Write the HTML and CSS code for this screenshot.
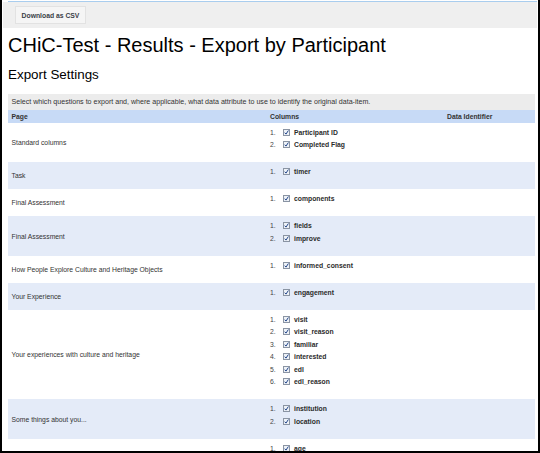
FILE: index.html
```html
<!DOCTYPE html>
<html>
<head>
<meta charset="utf-8">
<link rel="stylesheet" href="styles.css">
</head>
<body>
<div class="frame">
  <div class="topline"></div>
  <div class="toolbar"><span class="btn">Download as CSV</span></div>
  <h1 class="title">CHiC-Test - Results - Export by Participant</h1>
  <h2 class="subtitle">Export Settings</h2>
  <table class="grid">
    <colgroup><col class="c-page"><col class="c-cols"><col class="c-id"></colgroup>
    <tr class="desc"><td colspan="3">Select which questions to export and, where applicable, what data attribute to use to identify the original data-item.</td></tr>
    <tr class="head"><th>Page</th><th>Columns</th><th>Data Identifier</th></tr>
    <tr><td class="lbl">Standard columns</td><td><ol class="items">
      <li><span class="n">1.</span><svg class="cb" viewBox="0 0 7 7"><rect x=".5" y=".5" width="6" height="6"/><path d="M1.7 3.7L3 5.1L5.4 1.5"/></svg>Participant ID</li>
      <li><span class="n">2.</span><svg class="cb" viewBox="0 0 7 7"><rect x=".5" y=".5" width="6" height="6"/><path d="M1.7 3.7L3 5.1L5.4 1.5"/></svg>Completed Flag</li>
    </ol></td><td></td></tr>
    <tr class="alt"><td class="lbl">Task</td><td><ol class="items">
      <li><span class="n">1.</span><svg class="cb" viewBox="0 0 7 7"><rect x=".5" y=".5" width="6" height="6"/><path d="M1.7 3.7L3 5.1L5.4 1.5"/></svg>timer</li>
    </ol></td><td></td></tr>
    <tr><td class="lbl">Final Assessment</td><td><ol class="items">
      <li><span class="n">1.</span><svg class="cb" viewBox="0 0 7 7"><rect x=".5" y=".5" width="6" height="6"/><path d="M1.7 3.7L3 5.1L5.4 1.5"/></svg>components</li>
    </ol></td><td></td></tr>
    <tr class="alt"><td class="lbl">Final Assessment</td><td><ol class="items">
      <li><span class="n">1.</span><svg class="cb" viewBox="0 0 7 7"><rect x=".5" y=".5" width="6" height="6"/><path d="M1.7 3.7L3 5.1L5.4 1.5"/></svg>fields</li>
      <li><span class="n">2.</span><svg class="cb" viewBox="0 0 7 7"><rect x=".5" y=".5" width="6" height="6"/><path d="M1.7 3.7L3 5.1L5.4 1.5"/></svg>improve</li>
    </ol></td><td></td></tr>
    <tr><td class="lbl">How People Explore Culture and Heritage Objects</td><td><ol class="items">
      <li><span class="n">1.</span><svg class="cb" viewBox="0 0 7 7"><rect x=".5" y=".5" width="6" height="6"/><path d="M1.7 3.7L3 5.1L5.4 1.5"/></svg>informed_consent</li>
    </ol></td><td></td></tr>
    <tr class="alt"><td class="lbl">Your Experience</td><td><ol class="items">
      <li><span class="n">1.</span><svg class="cb" viewBox="0 0 7 7"><rect x=".5" y=".5" width="6" height="6"/><path d="M1.7 3.7L3 5.1L5.4 1.5"/></svg>engagement</li>
    </ol></td><td></td></tr>
    <tr><td class="lbl">Your experiences with culture and heritage</td><td><ol class="items">
      <li><span class="n">1.</span><svg class="cb" viewBox="0 0 7 7"><rect x=".5" y=".5" width="6" height="6"/><path d="M1.7 3.7L3 5.1L5.4 1.5"/></svg>visit</li>
      <li><span class="n">2.</span><svg class="cb" viewBox="0 0 7 7"><rect x=".5" y=".5" width="6" height="6"/><path d="M1.7 3.7L3 5.1L5.4 1.5"/></svg>visit_reason</li>
      <li><span class="n">3.</span><svg class="cb" viewBox="0 0 7 7"><rect x=".5" y=".5" width="6" height="6"/><path d="M1.7 3.7L3 5.1L5.4 1.5"/></svg>familiar</li>
      <li><span class="n">4.</span><svg class="cb" viewBox="0 0 7 7"><rect x=".5" y=".5" width="6" height="6"/><path d="M1.7 3.7L3 5.1L5.4 1.5"/></svg>interested</li>
      <li><span class="n">5.</span><svg class="cb" viewBox="0 0 7 7"><rect x=".5" y=".5" width="6" height="6"/><path d="M1.7 3.7L3 5.1L5.4 1.5"/></svg>edl</li>
      <li><span class="n">6.</span><svg class="cb" viewBox="0 0 7 7"><rect x=".5" y=".5" width="6" height="6"/><path d="M1.7 3.7L3 5.1L5.4 1.5"/></svg>edl_reason</li>
    </ol></td><td></td></tr>
    <tr class="alt"><td class="lbl">Some things about you...</td><td><ol class="items">
      <li><span class="n">1.</span><svg class="cb" viewBox="0 0 7 7"><rect x=".5" y=".5" width="6" height="6"/><path d="M1.7 3.7L3 5.1L5.4 1.5"/></svg>institution</li>
      <li><span class="n">2.</span><svg class="cb" viewBox="0 0 7 7"><rect x=".5" y=".5" width="6" height="6"/><path d="M1.7 3.7L3 5.1L5.4 1.5"/></svg>location</li>
    </ol></td><td></td></tr>
    <tr><td class="lbl"></td><td><ol class="items">
      <li><span class="n">1.</span><svg class="cb" viewBox="0 0 7 7"><rect x=".5" y=".5" width="6" height="6"/><path d="M1.7 3.7L3 5.1L5.4 1.5"/></svg>age</li>
    </ol></td><td></td></tr>
  </table>
</div>
</body>
</html>
```

FILE: styles.css
```css
html, body {
  margin: 0;
  padding: 0;
  background: #ffffff;
}
body {
  font-family: "Liberation Sans", Arial, sans-serif;
  color: #000;
}
.frame {
  box-sizing: border-box;
  width: 540px;
  height: 453px;
  overflow: hidden;
  border-left: 2px solid #000;
  border-right: 2px solid #000;
  border-bottom: 2px solid #000;
  padding-top: 1px;
  background: #fff;
}
.topline {
  height: 1px;
  margin: 0 1px 0 6px;
  background: #a9cdee;
}
.toolbar {
  height: 26px;
  margin: 0 1px 0 1px;
  background: #efefef;
  display: flex;
  align-items: flex-start;
  padding: 4px 0 0 12px;
  box-sizing: border-box;
}
.btn {
  display: flex;
  align-items: center;
  justify-content: center;
  width: 71px;
  height: 18px;
  box-sizing: border-box;
  background: #f5f5f5;
  border: 1px solid #e2e2e2;
  font-size: 6.8px;
  font-weight: bold;
  color: #3a3f48;
}
.title {
  margin: 5px 0 0 6px;
  font-size: 20px;
  line-height: 24px;
  font-weight: normal;
  color: #000;
}
.subtitle {
  margin: 10px 0 0 6px;
  font-size: 13.4px;
  line-height: 16px;
  font-weight: normal;
  color: #000;
}
.grid {
  margin: 11px 0 0 6px;
  width: 527px;
  table-layout: fixed;
  border-collapse: collapse;
  font-size: 6.8px;
  color: #333;
}
.c-page { width: 258.5px; }
.c-cols { width: 177px; }
.c-id { width: 91.5px; }
.grid td, .grid th {
  padding: 0 3.5px;
  text-align: left;
  vertical-align: middle;
}
.desc td {
  height: 16.4px;
  background: #ececec;
  color: #333;
  font-size: 7.1px;
}
.head th {
  height: 12.6px;
  background: #c7daf6;
  font-weight: bold;
  color: #333;
}
.alt td {
  background: #e4ebf8;
}
.items {
  list-style: none;
  margin: 0;
  padding: 3px 0 11.5px 0;
}
.items li {
  display: flex;
  align-items: center;
  height: 12.5px;
  font-weight: bold;
  color: #2b2b2b;
}
.n {
  width: 13px;
  font-weight: normal;
  color: #444;
}
.cb {
  width: 7px;
  height: 7px;
  margin-right: 4px;
  flex: none;
}
.cb rect {
  fill: #eef2f7;
  stroke: #8a94a3;
  stroke-width: 1;
}
.cb path {
  fill: none;
  stroke: #23468a;
  stroke-width: 1;
}
```
